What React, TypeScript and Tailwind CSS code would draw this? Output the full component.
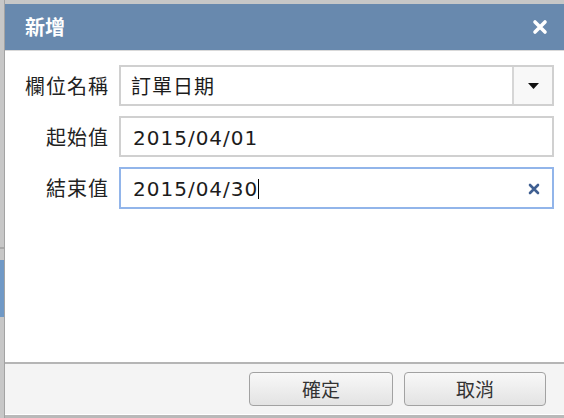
import React from 'react';

const cjk = "font-['Noto_Sans_CJK_TC','Noto_Sans_CJK_SC',sans-serif]";
const num = "font-['DejaVu_Sans','Noto_Sans_CJK_TC',sans-serif]";

const Label: React.FC<{ text: string }> = ({ text }) => (
  <div className={`w-[104px] shrink-0 text-right text-[20px] tracking-[1px] text-[#222] ${cjk}`}>{text}</div>
);

export default function App() {
  return (
    <div className="flex h-[418px] w-[564px] overflow-hidden bg-[#c7c7c7]">
      {/* page behind the dialog */}
      <div className="flex w-[4px] shrink-0 flex-col">
        <div className="h-[247px]" />
        <div className="h-[2px] bg-[#a9a9a9]" />
        <div className="h-[11px]" />
        <div className="h-[57px] bg-[#7099c6]" />
        <div className="flex-1" />
      </div>

      <div className="flex flex-1 flex-col border-l border-[#a3a3a3] pt-[4px]">
        {/* header */}
        <div className="flex h-[46px] items-center justify-between bg-[#6889ae] pl-[20px] pr-[16px]">
          <span className={`text-[20px] font-bold text-white ${cjk}`}>新增</span>
          <svg width="16" height="16" viewBox="0 0 16 16">
            <path d="M3 3 L13 13 M13 3 L3 13" stroke="#fff" strokeWidth="3.6" strokeLinecap="round" />
          </svg>
        </div>

        {/* body */}
        <div className="flex flex-1 flex-col gap-[10px] border-t border-[#d9d9d9] bg-white pl-0 pr-[10px] pt-[14px]">
          <div className="flex items-center gap-[10px]">
            <Label text="欄位名稱" />
            <div className="flex h-[41px] flex-1 border-2 border-[#d0d0d0] bg-white">
              <div className={`flex flex-1 items-center pl-[10px] text-[20px] tracking-[1px] text-[#1c1c1c] ${cjk}`}>訂單日期</div>
              <div className="flex w-[40px] items-center justify-center border-l-2 border-[#d6d6d6] bg-[#f8f8f8]">
                <svg width="11" height="6" viewBox="0 0 11 6">
                  <path d="M0 0 H11 L5.5 6 Z" fill="#111" />
                </svg>
              </div>
            </div>
          </div>

          <div className="flex items-center gap-[10px]">
            <Label text="起始值" />
            <div className={`flex h-[41px] flex-1 items-center border-2 border-[#d0d0d0] bg-white pl-[12px] pt-[2px] text-[20px] tracking-[1px] text-[#1c1c1c] ${num}`}>
              2015/04/01
            </div>
          </div>

          <div className="flex items-center gap-[10px]">
            <Label text="結束值" />
            <div className="flex h-[42px] flex-1 items-center border-2 border-[#92b5ea] bg-white pl-[12px] pr-[12px] pt-[2px]">
              <span className={`text-[20px] tracking-[1px] text-[#1c1c1c] ${num}`}>2015/04/30</span>
              <span className="h-[20px] w-[1px] bg-black" />
              <div className="flex-1" />
              <svg width="12" height="12" viewBox="0 0 12 12">
                <path d="M2 2 L10 10 M10 2 L2 10" stroke="#3f5f91" strokeWidth="2.6" strokeLinecap="round" />
              </svg>
            </div>
          </div>
        </div>

        {/* footer */}
        <div className="flex h-[52px] items-center justify-end gap-[11px] border-t-2 border-[#b5b5b5] bg-[#f4f4f4] pr-[18px]">
          <button className={`h-[34px] w-[144px] rounded-[4px] border border-[#a2a2a2] bg-gradient-to-b from-[#f8f8f8] to-[#e3e3e3] text-[19px] text-[#333] ${cjk}`}>確定</button>
          <button className={`h-[34px] w-[142px] rounded-[4px] border border-[#a2a2a2] bg-gradient-to-b from-[#f8f8f8] to-[#e3e3e3] text-[19px] text-[#333] ${cjk}`}>取消</button>
        </div>
        <div className="h-[1px] bg-white" />
        <div className="h-[3px] bg-[#b9b9b9]" />
      </div>
    </div>
  );
}
